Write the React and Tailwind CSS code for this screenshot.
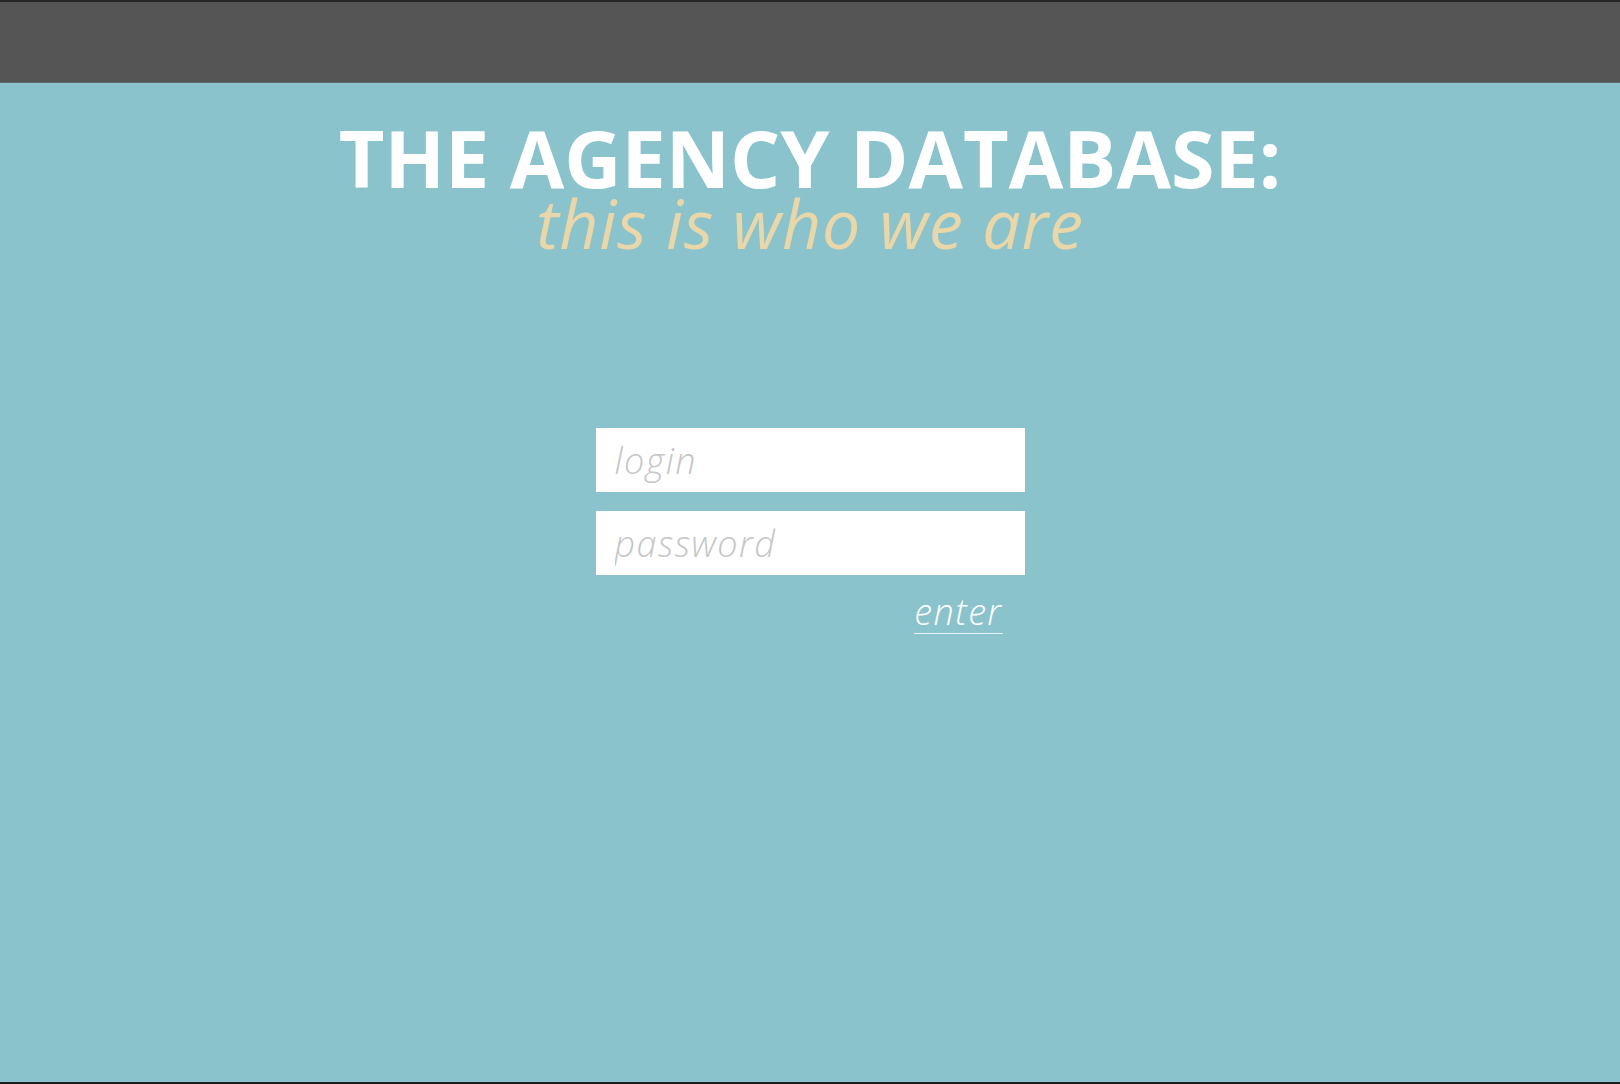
import React from 'react';

export default function App() {
  return (
    <div
      className="h-screen flex flex-col bg-[#8ac3cc] border-t-2 border-b-2 border-t-[#262626] border-b-[#1c1c1c]"
      style={{ fontFamily: '"Open Sans", "Liberation Sans", sans-serif' }}
    >
      <header className="h-[81px] shrink-0 bg-[#555555] border-b border-[#5f6769]" />

      <main className="flex-1 flex flex-col items-center pt-[39px]">
        <h1 className="text-[79px] leading-[72px] font-bold text-white">
          THE AGENCY DATABASE:
        </h1>
        <p className="text-[68px] leading-[58px] italic text-[#ead7a9] tracking-[0.012em]">
          this is who we are
        </p>

        <form className="mt-[176px] w-[429px] flex flex-col gap-[19px]">
          <input
            type="text"
            placeholder="login"
            className="h-[64px] w-full bg-white px-[19px] text-[36px] font-light italic tracking-[0.04em] text-gray-700 outline-none placeholder:text-[#c6c6c6]"
          />
          <input
            type="password"
            placeholder="password"
            className="h-[64px] w-full bg-white px-[19px] text-[36px] font-light italic tracking-[0.04em] text-gray-700 outline-none placeholder:text-[#c6c6c6]"
          />
          <div className="flex justify-end pr-[22px]">
            <a
              href="#"
              className="text-[36px] leading-[36px] font-light italic tracking-[0.04em] text-white pb-[3px] border-b border-white/80"
            >
              enter
            </a>
          </div>
        </form>
      </main>
    </div>
  );
}
